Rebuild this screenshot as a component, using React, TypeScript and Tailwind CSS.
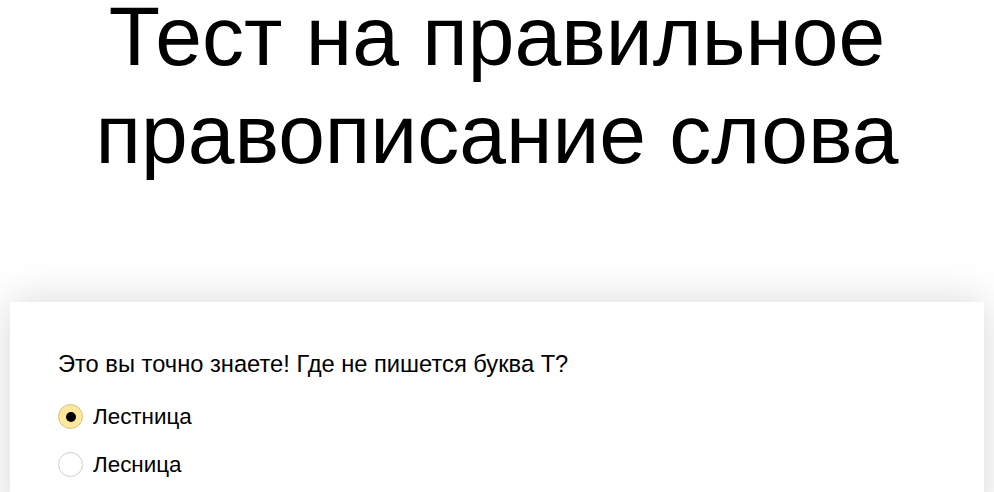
import { useState } from 'react'

const options = ['Лестница', 'Лесница']

export default function App() {
  const [picked, setPicked] = useState(0)

  return (
    <div className="min-h-screen bg-white font-['Liberation_Sans',Arial,sans-serif] text-black overflow-hidden">
      <h1 className="text-center text-[84px] font-normal">
        <span className="block leading-[72px]">Тест на правильное</span>
        <span className="block leading-[124px]">правописание слова</span>
      </h1>

      <div className="mx-[10px] mt-[106px] bg-white px-[48px] pt-[48px] pb-10 shadow-[0_0_40px_rgba(0,0,0,0.16)]">
        <p className="text-[23.7px] leading-[28px]">Это вы точно знаете! Где не пишется буква Т?</p>
        <div className="mt-[26px] flex flex-col gap-[23px]">
          {options.map((o, i) => (
            <label key={o} className="flex items-center gap-[10px] cursor-pointer" onClick={() => setPicked(i)}>
              <span
                className={
                  i === picked
                    ? 'flex h-[25px] w-[25px] items-center justify-center rounded-full border border-[#dcc07a] bg-[#fee89c]'
                    : 'flex h-[25px] w-[25px] items-center justify-center rounded-full border border-[#cfcfcf] bg-white'
                }
              >
                {i === picked && <span className="h-[10px] w-[10px] rounded-full bg-black" />}
              </span>
              <span className="text-[22.4px] leading-[25px]">{o}</span>
            </label>
          ))}
        </div>
      </div>
    </div>
  )
}
